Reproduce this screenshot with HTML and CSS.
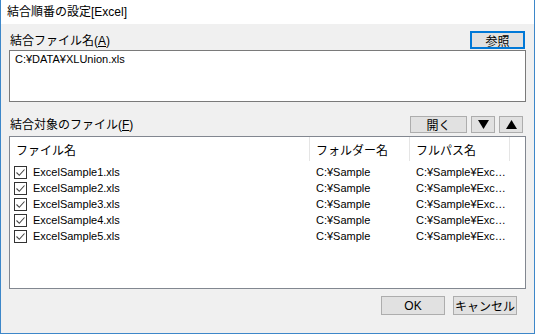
FILE: index.html
```html
<!DOCTYPE html>
<html lang="ja">
<head>
    <meta charset="UTF-8">
    <title>結合順番の設定[Excel]</title>
    <link rel="stylesheet" href="styles.css">
</head>
<body>
    <div class="window">
        <div class="titlebar">結合順番の設定[Excel]</div>

        <div class="content">
            <!-- 結合ファイル名 -->
            <div class="row row-target">
                <span class="label">結合ファイル名(<u>A</u>)</span>
                <button class="btn btn-default btn-browse">参照</button>
            </div>
            <div class="textbox">C:¥DATA¥XLUnion.xls</div>

            <!-- 結合対象のファイル -->
            <div class="row row-files">
                <span class="label">結合対象のファイル(<u>F</u>)</span>
                <div class="tools">
                    <button class="btn btn-open">開く</button>
                    <button class="btn btn-arrow btn-down">
                        <svg width="11" height="9" viewBox="0 0 11 9"><path d="M0 0h11L5.5 9z" fill="#000"/></svg>
                    </button>
                    <button class="btn btn-arrow">
                        <svg width="11" height="9" viewBox="0 0 11 9"><path d="M0 9h11L5.5 0z" fill="#000"/></svg>
                    </button>
                </div>
            </div>

            <div class="listview">
                <div class="list-head">
                    <div class="col col-name">ファイル名</div>
                    <div class="col col-folder">フォルダー名</div>
                    <div class="col col-path">フルパス名</div>
                    <div class="col col-rest"></div>
                </div>
                <div class="list-body" id="listBody"></div>
            </div>

            <div class="footer">
                <button class="btn btn-footer">OK</button>
                <button class="btn btn-footer">キャンセル</button>
            </div>
        </div>
    </div>

    <script>
        // 対象ファイル一覧
        const files = [
            'ExcelSample1.xls',
            'ExcelSample2.xls',
            'ExcelSample3.xls',
            'ExcelSample4.xls',
            'ExcelSample5.xls'
        ];

        const body = document.getElementById('listBody');
        files.forEach(name => {
            const row = document.createElement('div');
            row.className = 'list-row';
            // フルパスは列幅に収まらないので省略表示
            row.innerHTML =
                '<div class="cell col-name">' +
                    '<span class="check"><svg width="11" height="11" viewBox="0 0 11 11"><path d="M1.5 5.5l2.8 2.8L9.5 2.5" fill="none" stroke="#444" stroke-width="1.1"/></svg></span>' +
                    '<span>' + name + '</span>' +
                '</div>' +
                '<div class="cell col-folder">C:¥Sample</div>' +
                '<div class="cell col-path">C:¥Sample¥Exc…</div>';
            body.appendChild(row);
        });
    </script>
</body>
</html>
```

FILE: styles.css
```css
* {
    margin: 0;
    padding: 0;
    box-sizing: border-box;
}

body {
    font-family: 'Liberation Sans', 'Noto Sans CJK JP', sans-serif;
    font-size: 12px;
    color: #000000;
    background: #f0f0f0;
}

.window {
    width: 535px;
    height: 334px;
    background: #f0f0f0;
    border: 1px solid #3d87c9;
    border-top: none;
    display: flex;
    flex-direction: column;
}

.titlebar {
    height: 24px;
    background: #ffffff;
    padding-left: 6px;
    line-height: 24px;
    font-size: 12px;
}

.content {
    flex: 1;
    padding: 0 8px;
    display: flex;
    flex-direction: column;
}

.row {
    display: flex;
    justify-content: space-between;
    align-items: flex-end;
}

.row-target {
    margin-top: 7px;
    height: 18px;
}

.row-files {
    margin-top: 14px;
    height: 17px;
}

.label {
    padding-left: 1px;
    line-height: 16px;
}

.btn {
    font-family: inherit;
    font-size: 12px;
    background: #e1e1e1;
    border: 1px solid #adadad;
    color: #000000;
    display: flex;
    align-items: center;
    justify-content: center;
}

.btn-default {
    border-color: #0078d7;
    box-shadow: inset 0 0 0 1px #0078d7;
}

.btn-browse {
    width: 55px;
    height: 18px;
    margin-right: 1px;
}

.tools {
    display: flex;
    gap: 4px;
    margin-right: 3px;
}

.btn-open {
    width: 57px;
    height: 17px;
}

.btn-arrow {
    width: 24px;
    height: 17px;
}

.textbox {
    margin-top: 1px;
    height: 52px;
    background: #ffffff;
    border: 1px solid #7a7a7a;
    padding: 1px 5px;
    line-height: 14px;
    font-size: 11px;
}

.listview {
    margin-top: 3px;
    height: 153px;
    background: #ffffff;
    border: 1px solid #828790;
    overflow: hidden;
}

.list-head {
    display: flex;
    height: 27px;
}

.list-head .col {
    padding: 7px 0 0 6px;
    border-right: 1px solid #e5e5e5;
    line-height: 15px;
    height: 24px;
}

.col-name {
    width: 300px;
}

.col-folder {
    width: 100px;
}

.col-path {
    width: 100px;
}

.list-head .col-rest {
    flex: 1;
    border-right: none;
}

.list-row {
    display: flex;
    height: 16px;
    align-items: center;
}

.cell {
    padding-left: 6px;
    white-space: nowrap;
    line-height: 16px;
    font-size: 11px;
}

.cell.col-name {
    display: flex;
    align-items: center;
    padding-left: 4px;
}

.check {
    width: 13px;
    height: 13px;
    border: 1px solid #333333;
    background: #ffffff;
    margin-right: 6px;
    display: flex;
    align-items: center;
    justify-content: center;
}

.footer {
    margin-top: 7px;
    display: flex;
    justify-content: flex-end;
    gap: 8px;
    padding-right: 9px;
}

.btn-footer {
    width: 64px;
    height: 19px;
}
```
